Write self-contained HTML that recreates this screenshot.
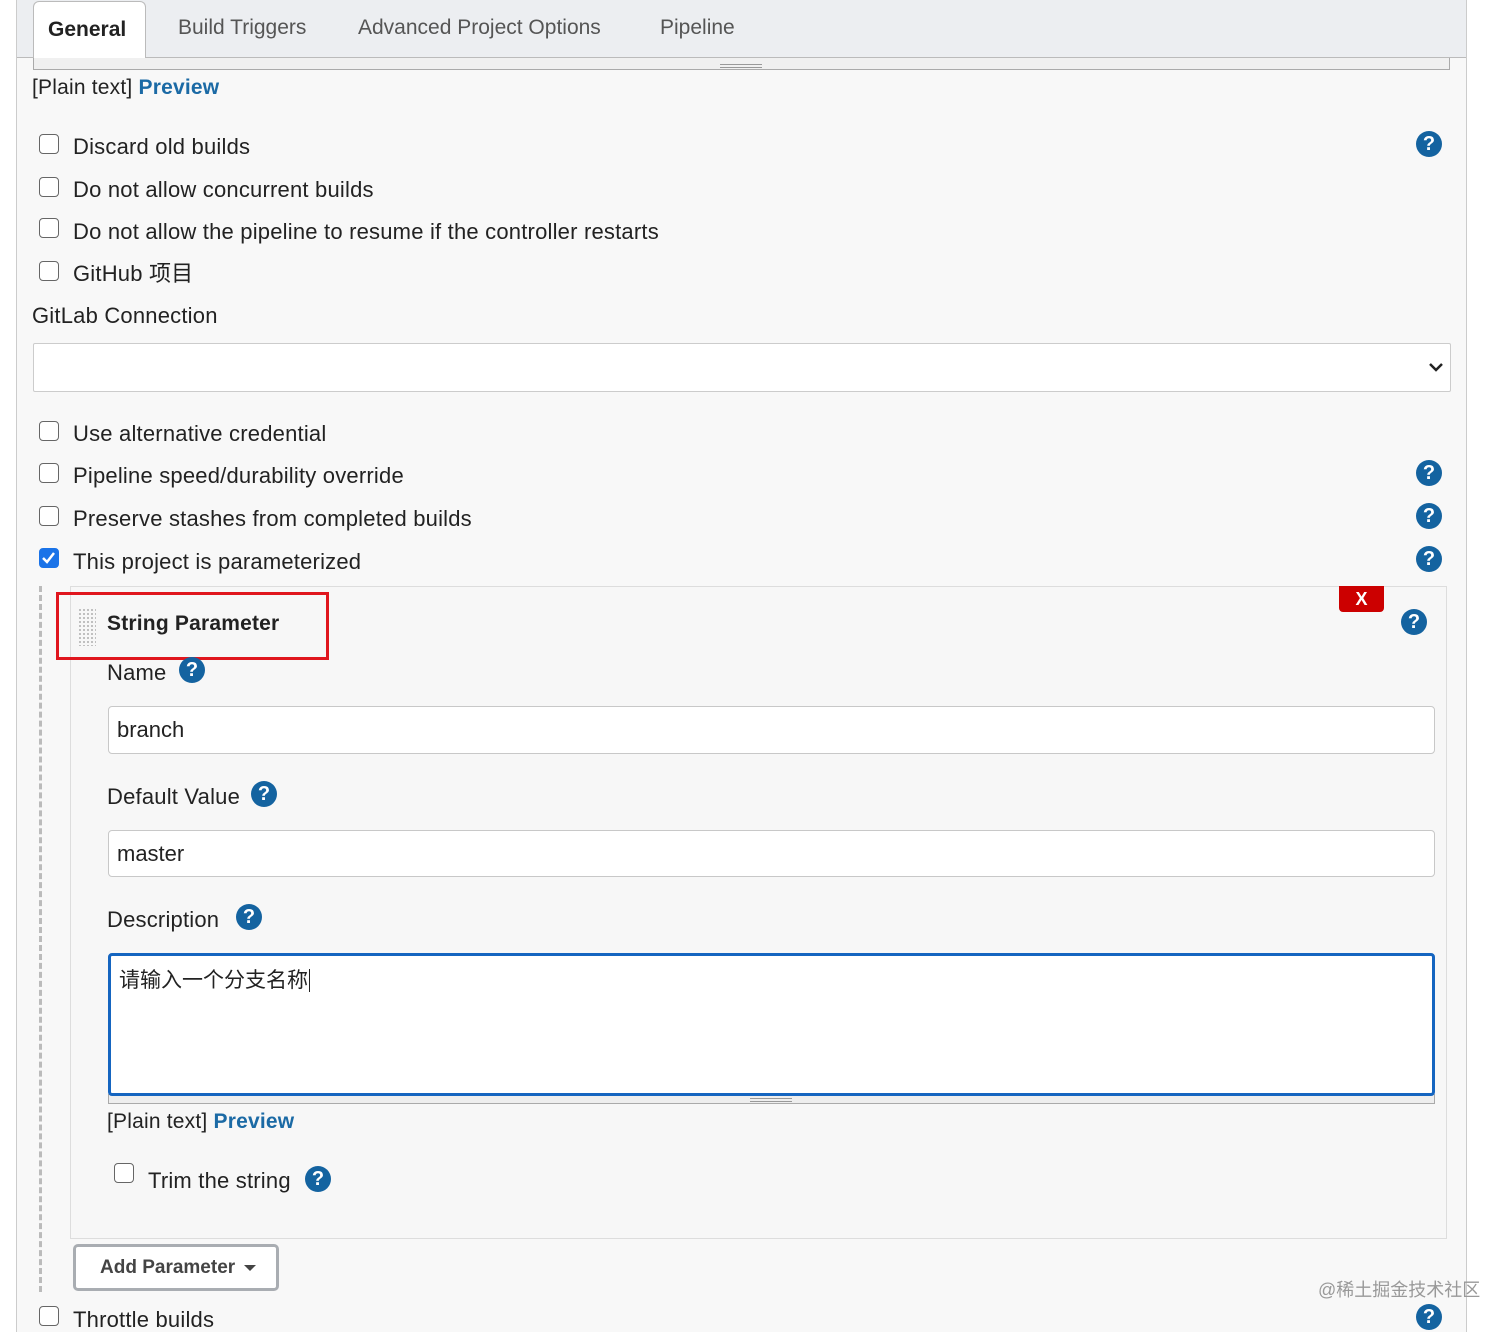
<!DOCTYPE html>
<html><head><meta charset="utf-8"><style>
*{box-sizing:border-box;margin:0;padding:0}
body{width:1512px;height:1332px;background:#fff;font-family:"Liberation Sans","Noto Sans CJK SC",sans-serif;color:#333;position:relative;overflow:hidden}
.a{position:absolute}
.wrap{left:16px;top:0;width:1451px;height:1332px;background:#f8f8f8;border-left:1px solid #ccc;border-right:1px solid #ccc}
.tabs{left:17px;top:0;width:1449px;height:58px;background:#eceef1;border-bottom:1px solid #bbb}
.tab{top:0;font-size:21px;color:#555;line-height:56px}
.t{font-size:22px;letter-spacing:0.2px;color:#222;line-height:24px;white-space:nowrap}
.cb{width:20px;height:20px;border:1.5px solid #666;border-radius:4px;background:#fff}
.h{width:26px;height:26px;border-radius:50%;background:#1463a0;color:#fff;font:bold 20px/26px "Liberation Sans",sans-serif;text-align:center}
.inp{background:#fff;border:1.5px solid #c8c8c8;border-radius:4px;font-size:21px;padding-left:8px;color:#222}
.blue{color:#1b6aa5;font-weight:bold}
</style></head><body>
<div class="a wrap"></div>
<div class="a tabs"></div>
<div class="a" style="left:33px;top:1px;width:113px;height:58px;background:#fff;border:1px solid #bbb;border-bottom:none;border-radius:6px 6px 0 0"></div>
<div class="a tab" style="left:48px;top:2px;color:#222;font-weight:bold">General</div>
<div class="a tab" style="left:178px">Build Triggers</div>
<div class="a tab" style="left:358px">Advanced Project Options</div>
<div class="a tab" style="left:660px">Pipeline</div>
<div class="a" style="left:33px;top:58px;width:1417px;height:12px;border:1px solid #aaa;border-top:none;background:#f0f0f0"></div>
<div class="a" style="left:720px;top:64px;width:42px;height:4px;border-top:1px solid #999;border-bottom:1px solid #999"></div>
<div class="a t" style="left:32px;top:76px;font-size:21px">[Plain text] <span class="blue">Preview</span></div>

<div class="a cb" style="left:39px;top:134px"></div><div class="a t" style="left:73px;top:135px">Discard old builds</div><div class="a h" style="left:1416px;top:131px">?</div>
<div class="a cb" style="left:39px;top:177px"></div><div class="a t" style="left:73px;top:178px">Do not allow concurrent builds</div>
<div class="a cb" style="left:39px;top:218px"></div><div class="a t" style="left:73px;top:220px">Do not allow the pipeline to resume if the controller restarts</div>
<div class="a cb" style="left:39px;top:261px"></div><div class="a t" style="left:73px;top:262px">GitHub 项目</div>
<div class="a t" style="left:32px;top:304px">GitLab Connection</div>
<div class="a" style="left:33px;top:343px;width:1418px;height:49px;background:#fff;border:1.5px solid #ccc;border-radius:2px"></div>
<svg class="a" style="left:1429px;top:362px" width="14" height="10"><path d="M1 2 L7 8 L13 2" stroke="#222" stroke-width="2.5" fill="none"/></svg>

<div class="a cb" style="left:39px;top:421px"></div><div class="a t" style="left:73px;top:422px">Use alternative credential</div>
<div class="a cb" style="left:39px;top:463px"></div><div class="a t" style="left:73px;top:464px">Pipeline speed/durability override</div><div class="a h" style="left:1416px;top:460px">?</div>
<div class="a cb" style="left:39px;top:506px"></div><div class="a t" style="left:73px;top:507px">Preserve stashes from completed builds</div><div class="a h" style="left:1416px;top:503px">?</div>
<div class="a cb" style="left:39px;top:548px;background:#1a73e8;border-color:#1a73e8"><svg width="17" height="17" style="position:absolute;left:0;top:0"><path d="M3 9 L7 13 L14 4" stroke="#fff" stroke-width="2.5" fill="none"/></svg></div><div class="a t" style="left:73px;top:550px">This project is parameterized</div><div class="a h" style="left:1416px;top:546px">?</div>

<div class="a" style="left:39px;top:586px;height:706px;border-left:3px dashed #bbb"></div>
<div class="a" style="left:70px;top:586px;width:1377px;height:653px;border:1.5px solid #ddd;background:#f7f7f7"></div>
<div class="a" style="left:78px;top:608px;width:18px;height:38px;background-image:radial-gradient(#bbb 1px,transparent 1.2px);background-size:4px 4px"></div>
<div class="a t" style="left:107px;top:612px;font-weight:bold;font-size:21px">String Parameter</div>
<div class="a" style="left:56px;top:592px;width:273px;height:68px;border:3px solid #e0161e"></div>
<div class="a" style="left:1339px;top:586px;width:45px;height:26px;background:#cc0000;border-radius:0 0 4px 4px;color:#fff;font:bold 18px/26px 'Liberation Sans',sans-serif;text-align:center">X</div>
<div class="a h" style="left:1401px;top:609px">?</div>

<div class="a t" style="left:107px;top:661px">Name</div><div class="a h" style="left:179px;top:657px">?</div>
<div class="a inp" style="left:108px;top:706px;width:1327px;height:48px;line-height:45px;font-size:22px">branch</div>
<div class="a t" style="left:107px;top:785px">Default Value</div><div class="a h" style="left:251px;top:781px">?</div>
<div class="a inp" style="left:108px;top:830px;width:1327px;height:47px;line-height:46px;font-size:22px">master</div>
<div class="a t" style="left:107px;top:908px">Description</div><div class="a h" style="left:236px;top:904px">?</div>
<div class="a" style="left:108px;top:1094px;width:1327px;height:10px;border:1px solid #aaa;border-top:none;background:#eee"></div>
<div class="a" style="left:750px;top:1098px;width:42px;height:4px;border-top:1px solid #999;border-bottom:1px solid #999"></div>
<div class="a" style="left:108px;top:953px;width:1327px;height:143px;background:#fff;border:3px solid #1565c0;border-radius:4px;font-size:21px;padding:8px 8px;color:#222">请输入一个分支名称<span style="border-left:1.5px solid #222;margin-left:1px"></span></div>
<div class="a t" style="left:107px;top:1110px;font-size:21px">[Plain text] <span class="blue">Preview</span></div>
<div class="a cb" style="left:114px;top:1163px"></div><div class="a t" style="left:148px;top:1169px">Trim the string</div><div class="a h" style="left:305px;top:1166px">?</div>

<div class="a" style="left:73px;top:1244px;width:206px;height:47px;border:3px solid #a9adb2;border-radius:5px;background:#fff;font:bold 19px/41px 'Liberation Sans',sans-serif;color:#444;padding-left:24px">Add Parameter <span style="display:inline-block;border-left:6px solid transparent;border-right:6px solid transparent;border-top:6px solid #444;vertical-align:middle;margin-left:4px"></span></div>
<div class="a cb" style="left:39px;top:1306px"></div><div class="a t" style="left:73px;top:1308px">Throttle builds</div>
<div class="a t" style="left:1318px;top:1278px;font-size:18px;color:#999;letter-spacing:0">@稀土掘金技术社区</div>
<div class="a h" style="left:1416px;top:1304px">?</div>
</body></html>
